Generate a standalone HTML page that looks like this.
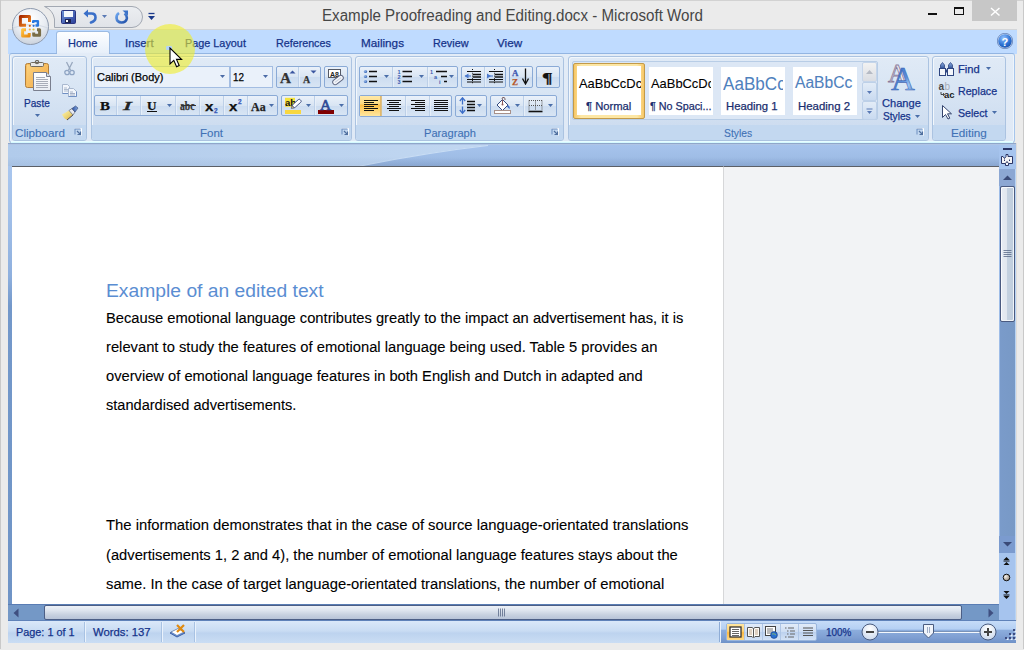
<!DOCTYPE html><html><head><meta charset='utf-8'><style>*{margin:0;padding:0;box-sizing:border-box}
html,body{width:1024px;height:650px;overflow:hidden;background:#EBEBEB;font-family:"Liberation Sans",sans-serif;position:relative}
div,span,svg{position:absolute}
.t{white-space:pre;transform-origin:0 50%;-webkit-text-stroke:0.25px currentColor}
#frameL{left:0;top:0;width:1px;height:650px;background:#C9C9C9}
#frameR{left:1023px;top:0;width:1px;height:650px;background:#C9C9C9}
#frameT{left:0;top:0;width:1024px;height:1px;background:#D2D2D2}
#frameB{left:0;top:649px;width:1024px;height:1px;background:#EBEBEB}
#tabs{left:8px;top:29px;width:1009px;height:25px;background:#BFDBFF;border-top:1px solid #D3D5D8}
#hometab{left:56px;top:31px;width:54px;height:24px;border:1px solid #9CBBE3;border-bottom:none;border-radius:3px 3px 0 0;background:linear-gradient(#FDFEFF,#E5EEF9)}
#ribbon{left:9px;top:53px;width:1006px;height:90px;background:linear-gradient(#E3ECF7,#DFE9F6);border:1px solid #A6C5EC;border-top-color:#93B5E2;border-bottom-color:#9DB4D6;border-radius:3px;box-shadow:inset 1px 0 0 #EEF5FC,inset -1px 0 0 #EEF5FC}
#ribhl{left:11px;top:141px;width:1002px;height:1.5px;background:linear-gradient(#F2FFFF,#C9F6FF)}
.grp{top:56px;height:85px;border:1px solid #ABC3E1;border-radius:3px;background:linear-gradient(#E0EAF6 0%,#D8E5F4 40%,#CEDDF0 82%);box-shadow:inset 1px 1px 0 #F2F7FC}
.glab{left:0;top:68px;width:100%;height:15px;background:#C3D8F0;border-radius:0 0 2px 2px}
.box{border:1px solid #8AAAD6;border-radius:2px;background:linear-gradient(#EAF1FA,#D9E5F3 50%,#CCDCF0 51%,#D8E5F4)}
.combo{border:1px solid #A3BDE2;background:#EAF1FA}
#docbg{left:8px;top:143px;width:1009px;height:24px;background:linear-gradient(#8FA6CA 0px,#8FA6CA 1px,#B0C5E5 1px,#B0C5E5 2px,#A4C2EB 3px,#9FBDE6 14px,#9BB8E0 19px,#8FACD5 23px)}
#leftstrip{left:8px;top:166px;width:4px;height:438px;background:linear-gradient(#A9C6EE 0px,#A3C1EA 40px,#8FB0DE 110px,#7398CA 140px,#6F94C6 438px)}
#page{left:12px;top:166px;width:711px;height:438px;background:#fff;border-top:1px solid #5B5F66}
#gray{left:723px;top:166px;width:277px;height:438px;background:#F2F3F5;border-left:1px solid #D6D7D9;border-top:1px solid #5B5F66}
#vsb{left:999px;top:166px;width:17px;height:438px;background:linear-gradient(90deg,#9FBDE8 0px,#9FBDE8 1px,#7A9BCA 1px,#7899C6 16px,#B8D4F4 16px)}
#rstrip{left:1016px;top:143px;width:1px;height:478px;background:#DEDCDA}
#hsb{left:8px;top:604px;width:991px;height:16px;background:#7498C6;border-top:1px solid #5A7DB4}
#corner{left:999px;top:553px;width:17px;height:67px;background:linear-gradient(90deg,#A6C4EE 16px,#B8D4F4 16px)}
#status{left:8px;top:620px;width:1008px;height:23px;background:linear-gradient(#DAE8F9 0%,#C9DCF3 45%,#BDD3EF 55%,#CADDF4 100%);border-top:1px solid #5F82B9}
</style></head><body><div id='frameT'></div><div id='frameL'></div><div id='frameR'></div><div id='frameB'></div>
<div id='tabs'></div><div id='hometab'></div>
<div id='ribbon'></div><div id='ribhl'></div><div style='left:57px;top:53px;width:52px;height:1px;background:#E3ECF8'></div>
<div class='grp' style='left:12px;width:75px'><div class='glab'></div></div>
<div class='grp' style='left:91px;width:261px'><div class='glab'></div></div>
<div class='grp' style='left:355px;width:209px'><div class='glab'></div></div>
<div class='grp' style='left:568px;width:361px'><div class='glab'></div></div>
<div class='grp' style='left:932px;width:74px'><div class='glab'></div></div>
<div id='docbg'></div><svg style='left:8px;top:145px' width='1009' height='21' viewBox='0 0 1009 21'><defs><linearGradient id='gsw' x1='0' y1='0' x2='1' y2='0'><stop offset='0' stop-color='#B1CBEB'/><stop offset='1' stop-color='#C1D7F1'/></linearGradient><linearGradient id='gsd' x1='0' y1='0' x2='0' y2='1'><stop offset='0' stop-color='#A6C3EC'/><stop offset='.6' stop-color='#9FBDE6'/><stop offset='1' stop-color='#91AED7'/></linearGradient></defs><rect x='0' y='0' width='1009' height='21' fill='url(#gsd)'/><path d='M0 0H480Q420 7 352 21H0Z' fill='url(#gsw)'/><path d='M480 0.5Q420 7.5 352 21' fill='none' stroke='#C9DDF4' stroke-width='1.2'/><defs><linearGradient id='gdk' x1='0' y1='0' x2='0' y2='1'><stop offset='0.55' stop-color='#3A5A90' stop-opacity='0'/><stop offset='1' stop-color='#3A5A90' stop-opacity='0.09'/></linearGradient></defs><rect x='0' y='0' width='1009' height='21' fill='url(#gdk)'/></svg><div id='leftstrip'></div><div id='page'></div><div id='gray'></div><div id='vsb'></div><div id='corner'></div><div id='rstrip'></div><div id='hsb'></div><div id='status'></div>
<svg style='left:24px;top:60px;' width='28' height='32' viewBox='0 0 28 32'>
<rect x='1.5' y='3.5' width='23' height='24' rx='2' fill='#F8BE5E' stroke='#B07E3E'/>
<rect x='3' y='5' width='20' height='21' fill='url(#gclip)'/>
<defs><linearGradient id='gclip' x1='0' y1='0' x2='1' y2='1'><stop offset='0' stop-color='#FBD27F'/><stop offset='1' stop-color='#F3A945'/></linearGradient>
<linearGradient id='gpap' x1='0' y1='0' x2='0' y2='1'><stop offset='0' stop-color='#FFFFFF'/><stop offset='1' stop-color='#E9EDF3'/></linearGradient></defs>
<rect x='6.5' y='2.5' width='13' height='4' rx='1' fill='#E8E8E8' stroke='#6F6A60'/>
<circle cx='13' cy='2' r='1.6' fill='none' stroke='#6F6A60' stroke-width='1.2'/>
<path d='M9.5 12.5H22.5L26.5 16.5V30.5H9.5Z' fill='url(#gpap)' stroke='#7A7F8E'/>
<path d='M22.5 12.5V16.5H26.5' fill='#D8DEE8' stroke='#7A7F8E'/>
<path d='M12 17.5H21M12 19.5H24M12 21.5H24M12 23.5H24M12 25.5H24M12 27.5H24' stroke='#A8ADB8' stroke-width='1'/>
</svg>
<svg style='left:35px;top:114px;' width='5' height='3' viewBox='0 0 5 3'><path d='M0 0H5L2.5 3Z' fill='#4A6EA9'/></svg>
<svg style='left:64px;top:61px;' width='11' height='15' viewBox='0 0 11 15'>
<path d='M2.5 1L6.5 9M8.5 1L4.5 9' stroke='#98A8BE' stroke-width='1.3' fill='none'/>
<circle cx='3' cy='11.5' r='2.2' fill='none' stroke='#8FA5C4' stroke-width='1.3'/>
<circle cx='8' cy='11.5' r='2.2' fill='none' stroke='#8FA5C4' stroke-width='1.3'/>
</svg>
<svg style='left:62px;top:84px;' width='16' height='14' viewBox='0 0 16 14'>
<path d='M0.5 0.5H5.5L7.5 2.5V9.5H0.5Z' fill='#F2F6FC' stroke='#A9B8CF'/>
<path d='M0.5 9.5H7.5' stroke='#6F8FC4'/>
<path d='M2 4H5M2 5.5H6M2 7H6' stroke='#A0AEC4' stroke-width='0.8'/>
<path d='M6.5 4.5H11.5L14.5 7.5V12.5H6.5Z' fill='#F2F6FC' stroke='#A9B8CF'/>
<path d='M6.5 12.5H14.5M14.5 7.5V12.5' stroke='#6F8FC4'/>
<path d='M8 8H11M8 9.5H13M8 11H13' stroke='#8F9EB8' stroke-width='0.8'/>
</svg>
<svg style='left:61px;top:105px;' width='18' height='16' viewBox='0 0 18 16'>
<defs><linearGradient id='gbr' x1='0' y1='0' x2='1' y2='1'><stop offset='0' stop-color='#FFF6B0'/><stop offset='.6' stop-color='#E8D070'/><stop offset='1' stop-color='#D98A20'/></linearGradient>
<linearGradient id='ghd' x1='0' y1='0' x2='1' y2='0'><stop offset='0' stop-color='#3050A0'/><stop offset='1' stop-color='#80A8E0'/></linearGradient></defs>
<path d='M1 9.5L8 5.5L12 10L6 15Q2.5 13.5 1 9.5Z' fill='url(#gbr)'/>
<path d='M6 15L12 10' stroke='#4A4A5A' stroke-width='1'/>
<path d='M8 5.5L11 3.5L14 7L12 10Z' fill='#E6E8F0' stroke='#60646F' stroke-width='0.7'/>
<path d='M11 3.5L14.5 1L17 3L14 7Z' fill='url(#ghd)' stroke='#2C3F70' stroke-width='0.6'/>
</svg>
<svg style='left:74px;top:128px;' width='8' height='8' viewBox='0 0 8 8'><path d='M0.5 0.5H7.5V7.5' fill='none' stroke='#fff' stroke-width='1'/><path d='M0.5 0.5H6.5V1.5H1.5V6.5H0.5Z' fill='#6C8DC0'/><path d='M3 3L6.5 6.5M6.5 3.5V6.5H3.5' fill='none' stroke='#50709F' stroke-width='1.2'/></svg>
<div class='combo' style='left:94px;top:66px;width:136px;height:22px'></div>
<div class='combo' style='left:230px;top:66px;width:43px;height:22px'></div>
<svg style='left:220px;top:75px;' width='5' height='3' viewBox='0 0 5 3'><path d='M0 0H5L2.5 3Z' fill='#4B6BA6'/></svg>
<svg style='left:263px;top:75px;' width='5' height='3' viewBox='0 0 5 3'><path d='M0 0H5L2.5 3Z' fill='#4B6BA6'/></svg>
<div class='box' style='left:276px;top:66px;width:45px;height:22px'></div>
<div style='left:298px;top:67px;width:1px;height:20px;background:#BDD0E8'></div><div style='left:299px;top:67px;width:1px;height:20px;background:#EAF1FA;opacity:.8'></div>
<div class='box' style='left:324px;top:66px;width:24px;height:22px'></div>
<svg style='left:289px;top:70px;' width='7' height='4' viewBox='0 0 7 4'><path d='M0.5 3.5H6.5L3.5 0.5Z' fill='#3B56A0'/></svg>
<svg style='left:310px;top:70px;' width='7' height='4' viewBox='0 0 7 4'><path d='M0.5 0.5H6.5L3.5 3.5Z' fill='#3B56A0'/></svg>
<svg style='left:327px;top:68px;' width='19' height='18' viewBox='0 0 19 18'>
<rect x='1.5' y='1.5' width='12' height='8' fill='#fff' stroke='#555a66'/>
<text x='3' y='8.5' font-family='Liberation Sans' font-size='7' font-weight='bold' fill='#222'>A8</text>
<g transform='rotate(-38 11 12)'><rect x='5' y='9.5' width='12' height='5' rx='2.5' fill='#F4F6FA' stroke='#5E6680'/><path d='M7 12H15' stroke='#C7CFDD'/></g>
</svg>
<div class='box' style='left:94px;top:95px;width:184px;height:21px'></div>
<div style='left:116px;top:96px;width:1px;height:19px;background:#BDD0E8'></div><div style='left:117px;top:96px;width:1px;height:19px;background:#EAF1FA;opacity:.8'></div>
<div style='left:140px;top:96px;width:1px;height:19px;background:#BDD0E8'></div><div style='left:141px;top:96px;width:1px;height:19px;background:#EAF1FA;opacity:.8'></div>
<div style='left:175px;top:96px;width:1px;height:19px;background:#BDD0E8'></div><div style='left:176px;top:96px;width:1px;height:19px;background:#EAF1FA;opacity:.8'></div>
<div style='left:199px;top:96px;width:1px;height:19px;background:#BDD0E8'></div><div style='left:200px;top:96px;width:1px;height:19px;background:#EAF1FA;opacity:.8'></div>
<div style='left:223px;top:96px;width:1px;height:19px;background:#BDD0E8'></div><div style='left:224px;top:96px;width:1px;height:19px;background:#EAF1FA;opacity:.8'></div>
<div style='left:247px;top:96px;width:1px;height:19px;background:#BDD0E8'></div><div style='left:248px;top:96px;width:1px;height:19px;background:#EAF1FA;opacity:.8'></div>
<div style='left:147px;top:111px;width:10px;height:1px;background:#111'></div>
<svg style='left:167px;top:104px;' width='5' height='3' viewBox='0 0 5 3'><path d='M0 0H5L2.5 3Z' fill='#4A6EA9'/></svg>
<div style='left:181px;top:105px;width:15px;height:1px;background:#333'></div>
<svg style='left:269px;top:104px;' width='5' height='3' viewBox='0 0 5 3'><path d='M0 0H5L2.5 3Z' fill='#4A6EA9'/></svg>
<div class='box' style='left:281px;top:95px;width:67px;height:21px'></div>
<div style='left:314px;top:96px;width:1px;height:19px;background:#BDD0E8'></div><div style='left:315px;top:96px;width:1px;height:19px;background:#EAF1FA;opacity:.8'></div>
<svg style='left:284px;top:96px;' width='19' height='19' viewBox='0 0 19 19'>
<rect x='1' y='1.8' width='10' height='9' fill='#F5E23A'/>
<text x='1' y='9.8' font-family='Liberation Sans' font-size='9.5' font-weight='bold' fill='#111'>ab</text>
<g transform='rotate(-42 12 8)'><rect x='8' y='6.3' width='10' height='3.6' rx='1.4' fill='#fff' stroke='#3E4E80' stroke-width='0.9'/><path d='M8 6.3L5.5 8.1L8 9.9Z' fill='#E0C070' stroke='#3E4E80' stroke-width='0.6'/></g>
<rect x='1' y='14' width='16' height='4' fill='#F8D740'/>
</svg>
<svg style='left:306px;top:104px;' width='5' height='3' viewBox='0 0 5 3'><path d='M0 0H5L2.5 3Z' fill='#4A6EA9'/></svg>
<div style='left:318px;top:110px;width:16px;height:4px;background:#800000'></div>
<svg style='left:339px;top:104px;' width='5' height='3' viewBox='0 0 5 3'><path d='M0 0H5L2.5 3Z' fill='#4A6EA9'/></svg>
<svg style='left:341px;top:128px;' width='8' height='8' viewBox='0 0 8 8'><path d='M0.5 0.5H7.5V7.5' fill='none' stroke='#fff' stroke-width='1'/><path d='M0.5 0.5H6.5V1.5H1.5V6.5H0.5Z' fill='#6C8DC0'/><path d='M3 3L6.5 6.5M6.5 3.5V6.5H3.5' fill='none' stroke='#50709F' stroke-width='1.2'/></svg>
<div class='box' style='left:359px;top:66px;width:99px;height:22px'></div>
<div style='left:392px;top:67px;width:1px;height:20px;background:#BDD0E8'></div><div style='left:393px;top:67px;width:1px;height:20px;background:#EAF1FA;opacity:.8'></div>
<div style='left:427px;top:67px;width:1px;height:20px;background:#BDD0E8'></div><div style='left:428px;top:67px;width:1px;height:20px;background:#EAF1FA;opacity:.8'></div>
<svg style='left:363px;top:69px;' width='16' height='16' viewBox='0 0 16 16'>
<defs><radialGradient id='gdot' cx='.35' cy='.35' r='.7'><stop offset='0' stop-color='#9FC0F0'/><stop offset='1' stop-color='#2A5AAE'/></radialGradient></defs>
<circle cx='2.5' cy='2.5' r='1.6' fill='url(#gdot)'/><circle cx='2.5' cy='7.5' r='1.6' fill='url(#gdot)'/><circle cx='2.5' cy='12.5' r='1.6' fill='url(#gdot)'/>
<path d='M6 2.5H14M6 7.5H14M6 12.5H14' stroke='#111' stroke-width='1.6'/>
</svg>
<svg style='left:384px;top:75px;' width='5' height='3' viewBox='0 0 5 3'><path d='M0 0H5L2.5 3Z' fill='#4A6EA9'/></svg>
<svg style='left:396px;top:68px;' width='17' height='17' viewBox='0 0 17 17'>
<text x='1.5' y='6' font-family='Liberation Sans' font-size='5.5' font-weight='bold' fill='#3A5BB0'>1</text>
<text x='1.5' y='11' font-family='Liberation Sans' font-size='5.5' font-weight='bold' fill='#3A5BB0'>2</text>
<text x='1.5' y='16' font-family='Liberation Sans' font-size='5.5' font-weight='bold' fill='#3A5BB0'>3</text>
<path d='M6.5 3.5H16M6.5 8.5H16M6.5 13.5H16' stroke='#111' stroke-width='1.6'/>
</svg>
<svg style='left:419px;top:75px;' width='5' height='3' viewBox='0 0 5 3'><path d='M0 0H5L2.5 3Z' fill='#4A6EA9'/></svg>
<svg style='left:429px;top:68px;' width='20' height='17' viewBox='0 0 20 17'>
<text x='1' y='6' font-family='Liberation Sans' font-size='5.5' font-weight='bold' fill='#3A5BB0'>1</text>
<text x='5' y='11' font-family='Liberation Sans' font-size='5.5' font-weight='bold' fill='#3A5BB0'>a</text>
<text x='10' y='16' font-family='Liberation Sans' font-size='5.5' font-weight='bold' fill='#3A5BB0'>i</text>
<path d='M7 3.5H18M12 8.5H18M15 13.5H18' stroke='#111' stroke-width='1.4'/>
</svg>
<svg style='left:449px;top:75px;' width='5' height='3' viewBox='0 0 5 3'><path d='M0 0H5L2.5 3Z' fill='#4A6EA9'/></svg>
<div class='box' style='left:461px;top:66px;width:45px;height:22px'></div>
<div style='left:484px;top:67px;width:1px;height:20px;background:#BDD0E8'></div><div style='left:485px;top:67px;width:1px;height:20px;background:#EAF1FA;opacity:.8'></div>
<svg style='left:464px;top:68px;' width='18' height='18' viewBox='0 0 18 18'>
<path d='M8.5 1V16' stroke='#111' stroke-width='1' stroke-dasharray='1 1.2'/>
<path d='M3 3.5H17M3 11.5H17M3 14H17' stroke='#111' stroke-width='1'/>
<path d='M9 6.5H17M9 9H17' stroke='#111' stroke-width='1.7'/>
<path d='M0.5 8L4.5 5.5V10.5Z' fill='#4A78CC'/><path d='M1 8H7' stroke='#4A78CC' stroke-width='1.1'/>
</svg>
<svg style='left:486px;top:68px;' width='18' height='18' viewBox='0 0 18 18'>
<path d='M8.5 1V16' stroke='#111' stroke-width='1' stroke-dasharray='1 1.2'/>
<path d='M3 3.5H17M3 11.5H17M3 14H17' stroke='#111' stroke-width='1'/>
<path d='M9 6.5H17M9 9H17' stroke='#111' stroke-width='1.7'/>
<path d='M5 8L1 5.5V10.5Z' fill='#4A78CC'/><path d='M1 8H7' stroke='#4A78CC' stroke-width='1.1'/>
</svg>
<div class='box' style='left:509px;top:66px;width:24px;height:22px'></div>
<svg style='left:522px;top:68px;' width='7' height='17' viewBox='0 0 7 17'><path d='M3.5 0.5V15' stroke='#111' stroke-width='1.3'/><path d='M0.5 10.5L3.5 16L6.5 10.5' fill='none' stroke='#111' stroke-width='1.3'/></svg>
<div class='box' style='left:536px;top:66px;width:24px;height:22px'></div>
<div class='box' style='left:359px;top:95px;width:93px;height:22px'></div>
<div style='left:360px;top:96px;width:21px;height:20px;background:linear-gradient(#FFE9A8 0%,#FFD980 40%,#FFBE45 45%,#FFD473 70%,#FFE6A0 100%);border-right:1px solid #E3B86A'></div>
<div style='left:405px;top:96px;width:1px;height:20px;background:#BDD0E8'></div><div style='left:406px;top:96px;width:1px;height:20px;background:#EAF1FA;opacity:.8'></div>
<div style='left:429px;top:96px;width:1px;height:20px;background:#BDD0E8'></div><div style='left:430px;top:96px;width:1px;height:20px;background:#EAF1FA;opacity:.8'></div>
<div style='left:381px;top:96px;width:1px;height:20px;background:#D9C08A'></div>
<svg style='left:364px;top:95px;' width='15' height='17' viewBox='0 0 15 17'><path d='M0 5.5H14M0 7.5H10M0 9.5H14M0 11.5H10M0 13.5H14M0 15.5H10' stroke='#111' stroke-width='1.1'/></svg>
<svg style='left:387px;top:95px;' width='15' height='17' viewBox='0 0 15 17'><path d='M0.0 5.5H14.0M2.0 7.5H12.0M0.0 9.5H14.0M2.0 11.5H12.0M0.0 13.5H14.0M2.0 15.5H12.0' stroke='#111' stroke-width='1.1'/></svg>
<svg style='left:411px;top:95px;' width='15' height='17' viewBox='0 0 15 17'><path d='M0 5.5H14M4 7.5H14M0 9.5H14M4 11.5H14M0 13.5H14M4 15.5H14' stroke='#111' stroke-width='1.1'/></svg>
<svg style='left:434px;top:95px;' width='15' height='17' viewBox='0 0 15 17'><path d='M0 5.5H14M0 7.5H14M0 9.5H14M0 11.5H14M0 13.5H14M0 15.5H14' stroke='#111' stroke-width='1.1'/></svg>
<div class='box' style='left:455px;top:95px;width:32px;height:22px'></div>
<svg style='left:459px;top:97px;' width='18' height='18' viewBox='0 0 18 18'>
<path d='M3.5 1V7.5M3.5 9.5V16' stroke='#3E6FC8' stroke-width='1.3'/>
<path d='M0.8 4L3.5 0.8L6.2 4M0.8 13L3.5 16.2L6.2 13' fill='none' stroke='#3E6FC8' stroke-width='1.3'/>
<path d='M8 4.5H16M8 7.5H16M8 10.5H16M8 13.5H16' stroke='#111' stroke-width='1.4'/>
</svg>
<svg style='left:477px;top:104px;' width='5' height='3' viewBox='0 0 5 3'><path d='M0 0H5L2.5 3Z' fill='#4A6EA9'/></svg>
<div class='box' style='left:490px;top:95px;width:67px;height:22px'></div>
<div style='left:523px;top:96px;width:1px;height:20px;background:#BDD0E8'></div><div style='left:524px;top:96px;width:1px;height:20px;background:#EAF1FA;opacity:.8'></div>
<svg style='left:494px;top:97px;' width='18' height='18' viewBox='0 0 18 18'>
<path d='M3 8L8.5 2.5L14 8L8.5 13.5Z' fill='#fff' stroke='#334A80'/>
<path d='M8.5 2.5V7.5' stroke='#8A5A5A' stroke-width='1'/><circle cx='8.5' cy='7.5' r='1' fill='#8A5A5A'/>
<path d='M8 2Q8 0 10 0.5Q11.5 1 11 3' fill='none' stroke='#6A4A4A' stroke-width='0.9'/>
<path d='M14 8Q16.5 9.5 15.5 12Q14 10.5 13 9.5Z' fill='#3C6CC4'/>
<rect x='0.5' y='13.5' width='16' height='3' fill='#fff' stroke='#A89088'/>
</svg>
<svg style='left:515px;top:104px;' width='5' height='3' viewBox='0 0 5 3'><path d='M0 0H5L2.5 3Z' fill='#4A6EA9'/></svg>
<svg style='left:528px;top:99px;' width='15' height='14' viewBox='0 0 15 14'>
<path d='M1 1.5H14M1 6.5H14M1 1.5V11M7.5 1.5V11M14 1.5V11' stroke='#555' stroke-width='1' stroke-dasharray='1 1'/>
<path d='M0.5 12.5H14.5' stroke='#111' stroke-width='1.6'/>
</svg>
<svg style='left:548px;top:104px;' width='5' height='3' viewBox='0 0 5 3'><path d='M0 0H5L2.5 3Z' fill='#4A6EA9'/></svg>
<svg style='left:551px;top:128px;' width='8' height='8' viewBox='0 0 8 8'><path d='M0.5 0.5H7.5V7.5' fill='none' stroke='#fff' stroke-width='1'/><path d='M0.5 0.5H6.5V1.5H1.5V6.5H0.5Z' fill='#6C8DC0'/><path d='M3 3L6.5 6.5M6.5 3.5V6.5H3.5' fill='none' stroke='#50709F' stroke-width='1.2'/></svg>
<div style='left:572px;top:61px;width:306px;height:59px;border:1px solid #B8CDE6;background:#DCE7F5;border-radius:2px'></div>
<div style='left:573px;top:63px;width:72px;height:56px;border-radius:2px;background:linear-gradient(90deg,#F7C766,#FDE7A5 10%,#FDE7A5 90%,#F7C766);border:1px solid #C29A4A'></div>
<div style='left:577px;top:66px;width:64px;height:49px;background:#fff'></div>
<div style='left:649px;top:67px;width:64px;height:48px;background:#fff'></div>
<div style='left:721px;top:67px;width:64px;height:48px;background:#fff'></div>
<div style='left:793px;top:67px;width:64px;height:48px;background:#fff'></div>
<div style='left:577px;top:66px;width:64px;height:49px;overflow:hidden'><div class='t' style='left:1.9px;top:11.4px;font-size:13.3px;line-height:13.3px;color:#000;transform:scaleX(0.97);-webkit-text-stroke:0.1px #000'>AaBbCcDc</div></div>
<div style='left:649px;top:67px;width:62px;height:48px;overflow:hidden'><div class='t' style='left:1.8px;top:10.4px;font-size:13.3px;line-height:13.3px;color:#000;transform:scaleX(0.97);-webkit-text-stroke:0.1px #000'>AaBbCcDc</div></div>
<div style='left:721px;top:67px;width:62px;height:48px;overflow:hidden'><div class='t' style='left:1.8px;top:8.1px;font-size:18px;line-height:18px;color:#4F81BD;transform:scaleX(0.95);-webkit-text-stroke:0'>AaBbCc</div></div>
<div style='left:793px;top:67px;width:64px;height:48px;overflow:hidden'><div class='t' style='left:2px;top:8.2px;font-size:16px;line-height:16px;color:#4F81BD;transform:scaleX(0.976);-webkit-text-stroke:0.1px #4F81BD'>AaBbCc</div></div>
<div style='left:862px;top:62px;width:15px;height:20px;border:1px solid #C5D5EA;border-radius:2px;background:linear-gradient(#F2F2F2,#DADDE3)'></div>
<div style='left:862px;top:82px;width:15px;height:19px;border:1px solid #BDD0E8;border-radius:2px;background:linear-gradient(#E3ECF7,#C9DAF0)'></div>
<div style='left:862px;top:101px;width:15px;height:19px;border:1px solid #BDD0E8;border-radius:2px;background:linear-gradient(#E3ECF7,#C9DAF0)'></div>
<svg style='left:866px;top:70px;' width='7' height='4' viewBox='0 0 7 4'><path d='M0 4H7L3.5 0Z' fill='#B5BAC4'/></svg>
<svg style='left:867px;top:91px;' width='5' height='3' viewBox='0 0 5 3'><path d='M0 0H5L2.5 3Z' fill='#5A7AB5'/></svg>
<svg style='left:866px;top:108px;' width='7' height='7' viewBox='0 0 7 7'><path d='M0.5 1H6.5' stroke='#5A7AB5'/><path d='M1 3H6L3.5 6Z' fill='#5A7AB5'/></svg>
<svg style='left:884px;top:60px;' width='36' height='32' viewBox='0 0 36 32'>
<defs><linearGradient id='gA' x1='0' y1='0' x2='1' y2='1'><stop offset='0' stop-color='#2F5FB8'/><stop offset='.55' stop-color='#5C8FDA'/><stop offset='.7' stop-color='#9CC4F2'/><stop offset='1' stop-color='#3A6CC0'/></linearGradient></defs>
<text x='4' y='22' font-family='Liberation Serif' font-size='26' fill='#EEEEF2' stroke='#8A7C9C' stroke-width='0.8'>A</text>
<text x='7' y='30' font-family='Liberation Serif' font-size='33' fill='url(#gA)' stroke='#3560B0' stroke-width='0.5'>A</text>
</svg>
<svg style='left:915px;top:115px;' width='5' height='3' viewBox='0 0 5 3'><path d='M0 0H5L2.5 3Z' fill='#4A6EA9'/></svg>
<svg style='left:916px;top:128px;' width='8' height='8' viewBox='0 0 8 8'><path d='M0.5 0.5H7.5V7.5' fill='none' stroke='#fff' stroke-width='1'/><path d='M0.5 0.5H6.5V1.5H1.5V6.5H0.5Z' fill='#6C8DC0'/><path d='M3 3L6.5 6.5M6.5 3.5V6.5H3.5' fill='none' stroke='#50709F' stroke-width='1.2'/></svg>
<svg style='left:939px;top:62px;' width='16' height='14' viewBox='0 0 16 14'>
<defs><linearGradient id='gbin' x1='0' y1='0' x2='0' y2='1'><stop offset='0' stop-color='#8FB3E8'/><stop offset='1' stop-color='#2F4F95'/></linearGradient></defs>
<rect x='0.5' y='6.5' width='6' height='7' fill='#F3F6FB' stroke='#2E4580'/>
<rect x='8.5' y='6.5' width='6' height='7' fill='#F3F6FB' stroke='#2E4580'/>
<path d='M1.5 6.5V3L3.5 0.5L5.5 3V6.5Z M9.5 6.5V3L11.5 0.5L13.5 3V6.5Z' fill='url(#gbin)' stroke='#2E4580' stroke-width='0.8'/>
<rect x='6.5' y='7.5' width='2' height='3' fill='#2E4580'/>
</svg>
<svg style='left:986px;top:67px;' width='5' height='3' viewBox='0 0 5 3'><path d='M0 0H5L2.5 3Z' fill='#4A6EA9'/></svg>
<svg style='left:938px;top:82px;' width='19' height='17' viewBox='0 0 19 17'>
<text x='0.5' y='8' font-family='Liberation Sans' font-size='10' font-weight='bold' fill='#4A4A4A'>a</text>
<text x='6.5' y='8' font-family='Liberation Sans' font-size='10' fill='#A6ACB6'>b</text>
<text x='6' y='15.5' font-family='Liberation Sans' font-size='9.5' font-weight='bold' fill='#222'>ac</text>
<path d='M3 10V12.5H6' fill='none' stroke='#333' stroke-width='0.9'/><path d='M5 11L6.5 12.5L5 14' fill='none' stroke='#333' stroke-width='0.8'/>
</svg>
<svg style='left:941px;top:104px;' width='11' height='16' viewBox='0 0 11 16'><path d='M1.5 1.5V13.5L4.5 10.5L7 15L8.8 14.2L6.5 9.8H10.5Z' fill='#fff' stroke='#35456E' stroke-width='1' stroke-linejoin='round'/></svg>
<svg style='left:992px;top:111px;' width='5' height='3' viewBox='0 0 5 3'><path d='M0 0H5L2.5 3Z' fill='#4A6EA9'/></svg>
<svg style='left:40px;top:4px' width='130' height='26' viewBox='0 0 130 26'><defs><linearGradient id='qat' x1='0' y1='0' x2='0' y2='1'><stop offset='0' stop-color='#ECEEF1'/><stop offset='1' stop-color='#E0E3E8'/></linearGradient></defs><path d='M4.5 2.5H92A10.5 10.5 0 0 1 92 23.5H14.5V15Q13 6 4.5 2.5Z' fill='url(#qat)' stroke='#A3A9B3' stroke-width='1'/></svg>
<svg style='left:61px;top:10px;' width='15' height='14' viewBox='0 0 15 14'>
<defs><linearGradient id='gsv' x1='0' y1='0' x2='1' y2='1'><stop offset='0' stop-color='#6E93D8'/><stop offset='1' stop-color='#2B3F9A'/></linearGradient></defs>
<rect x='0.5' y='0.5' width='14' height='13' rx='1' fill='url(#gsv)' stroke='#2A3580'/>
<rect x='3' y='1' width='9' height='6' fill='#F4F7FC'/>
<rect x='4' y='9' width='6' height='4' fill='#1C2350'/><rect x='5' y='10' width='2' height='2' fill='#fff'/>
</svg>
<svg style='left:83px;top:9px;' width='14' height='15' viewBox='0 0 14 15'>
<path d='M3 4.5H8.5Q12.5 4.5 12.5 8.5Q12.5 12 8 13.5' fill='none' stroke='#3A6FC8' stroke-width='2.6' stroke-linecap='round'/>
<path d='M0.5 4.5L5 0.5V8.5Z' fill='#3A6FC8'/>
</svg>
<svg style='left:102px;top:15px;' width='5' height='3' viewBox='0 0 5 3'><path d='M0 0H5L2.5 3Z' fill='#5A7AB5'/></svg>
<svg style='left:115px;top:10px;' width='14' height='14' viewBox='0 0 14 14'>
<defs><linearGradient id='gredo' x1='0' y1='0' x2='1' y2='1'><stop offset='0' stop-color='#6FA8F0'/><stop offset='1' stop-color='#1F4FA8'/></linearGradient></defs>
<path d='M4 3Q1.2 4.8 1.5 8Q2 12.3 6.5 12.5Q11 12.5 11.8 8.5Q12.2 5.5 9.5 3.5' fill='none' stroke='url(#gredo)' stroke-width='2.6'/>
<path d='M7.5 0.5H13V5.5Z' fill='#3A72C8'/>
</svg>
<svg style='left:148px;top:12px;' width='7' height='10' viewBox='0 0 7 10'><path d='M0.5 1.5H6.5' stroke='#1B3A8A' stroke-width='1.3'/><path d='M0 4H7L3.5 8Z' fill='#1B3A8A'/></svg>
<svg style='left:11px;top:7px;' width='39' height='39' viewBox='0 0 39 39'>
<defs>
<radialGradient id='gob' cx='.5' cy='.3' r='.75'><stop offset='0' stop-color='#FFFFFF'/><stop offset='.55' stop-color='#E9EDF3'/><stop offset='1' stop-color='#C5CDD8'/></radialGradient>
<linearGradient id='gor' x1='0' y1='0' x2='1' y2='1'><stop offset='0' stop-color='#A82A02'/><stop offset='1' stop-color='#F08A20'/></linearGradient>
<linearGradient id='gye' x1='0' y1='0' x2='1' y2='1'><stop offset='0' stop-color='#FFC040'/><stop offset='1' stop-color='#E88A10'/></linearGradient>
</defs>
<circle cx='19.5' cy='19.5' r='18' fill='url(#gob)' stroke='#8E9AAE' stroke-width='1'/>
<path d='M2 21Q19.5 14 37 21' fill='none' stroke='#D3DAE4' stroke-width='1'/>
<path d='M18.5 15V9.4H9.4V18.2H15' fill='none' stroke='url(#gor)' stroke-width='3' stroke-linejoin='round'/>
<path d='M22.2 16V14.1H26.9V18.5H24.5' fill='none' stroke='#2A7AE0' stroke-width='2.4' stroke-linejoin='round'/>
<path d='M15 22.7H11.6V29.1H18.2V26' fill='none' stroke='url(#gye)' stroke-width='3' stroke-linejoin='round'/>
<path d='M26 22.7H28.6V28.3H22.7V25.5' fill='none' stroke='#7A6E48' stroke-width='3' stroke-linejoin='round'/>
<circle cx='18.8' cy='18.8' r='1.1' fill='#D06010'/><circle cx='22.6' cy='18.8' r='1.1' fill='#2A70D8'/>
<circle cx='18.8' cy='22.5' r='1.1' fill='#F8B040'/><circle cx='22.5' cy='22.5' r='1.1' fill='#D8C040'/>
</svg>
<div style='left:972px;top:0;width:45px;height:21px;background:#C7C7C7'></div>
<svg style='left:990px;top:7px;' width='11' height='10' viewBox='0 0 11 10'><path d='M1 1L9.5 8.5M9.5 1L1 8.5' stroke='#fff' stroke-width='1.5'/></svg>
<div style='left:928px;top:13px;width:9px;height:2px;background:#111'></div>
<div style='left:954px;top:7px;width:10px;height:8px;border:1px solid #111;border-top-width:2px'></div>
<svg style='left:997px;top:33px;' width='16' height='16' viewBox='0 0 16 16'>
<defs><radialGradient id='ghelp' cx='.4' cy='.3' r='.8'><stop offset='0' stop-color='#8EC0FF'/><stop offset='.6' stop-color='#2A6ED0'/><stop offset='1' stop-color='#1A4AA0'/></radialGradient></defs>
<circle cx='8' cy='8' r='7.3' fill='url(#ghelp)' stroke='#fff' stroke-width='0.8'/><circle cx='8' cy='8' r='7.7' fill='none' stroke='#2C5298' stroke-width='0.6'/>
<text x='4.6' y='12.5' font-family='Liberation Sans' font-size='11' font-weight='bold' fill='#fff'>?</text>
</svg>
<div style='left:999px;top:145px;width:17px;height:24px;background:#A6C4EE'></div><div style='left:999px;top:169px;width:16px;height:17px;background:#8CA7D3'></div>
<svg style='left:1003px;top:175px;' width='9' height='5' viewBox='0 0 9 5'><path d='M0 5H9L4.5 0.5Z' fill='#3A4A78'/></svg>
<div style='left:1000px;top:186px;width:15px;height:136px;border:1px solid #4A5A80;border-radius:2px;box-shadow:inset 1px 1px 0 #F8FAFD,inset -1px -1px 0 #F0F4F8;background:linear-gradient(90deg,#E8ECF3,#E1E7EF 45%,#C4D1E0 50%,#BFCDDD 100%)'></div>
<svg style='left:1003px;top:250px;' width='9' height='7' viewBox='0 0 9 7'><path d='M0.5 0.5H8.5M0.5 2.5H8.5M0.5 4.5H8.5M0.5 6.5H8.5' stroke='#5A6A88' stroke-width='0.8'/></svg>
<div style='left:999px;top:536px;width:16px;height:17px;background:#7B9BCF'></div>
<svg style='left:1003px;top:542px;' width='9' height='5' viewBox='0 0 9 5'><path d='M0 0H9L4.5 4.5Z' fill='#3A4A78'/></svg>
<svg style='left:1003px;top:557px;' width='7' height='8' viewBox='0 0 7 8'><path d='M0.5 3H6.5L3.5 0Z M0.5 8H6.5L3.5 5Z' fill='#111'/><path d='M0.5 4H6.5' stroke='#111' stroke-width='1'/></svg>
<svg style='left:1002px;top:573px;' width='9' height='9' viewBox='0 0 9 9'><defs><radialGradient id='gbr2' cx='.35' cy='.35' r='.7'><stop offset='0' stop-color='#F4F0EA'/><stop offset='1' stop-color='#9A8E80'/></radialGradient></defs><circle cx='4.5' cy='4.5' r='3.3' fill='url(#gbr2)' stroke='#111' stroke-width='1'/></svg>
<svg style='left:1003px;top:591px;' width='7' height='8' viewBox='0 0 7 8'><path d='M0.5 0H6.5L3.5 3Z M0.5 5H6.5L3.5 8Z' fill='#111'/><path d='M0.5 4H6.5' stroke='#111' stroke-width='1'/></svg>
<svg style='left:13px;top:608px;' width='6' height='10' viewBox='0 0 6 10'><path d='M5.5 0.5V9.5L0.5 5Z' fill='#3F4F80'/></svg>
<div style='left:44px;top:605px;width:918px;height:15px;border:1px solid #4C5F86;border-radius:2px;background:linear-gradient(#EEF2F8,#DDE4EE 35%,#C6D0DF 70%,#B8C4D8)'></div>
<svg style='left:498px;top:608px;' width='7' height='9' viewBox='0 0 7 9'><path d='M0.5 0.5V8.5M2.5 0.5V8.5M4.5 0.5V8.5M6.5 0.5V8.5' stroke='#5A6A88' stroke-width='0.8'/></svg>
<svg style='left:988px;top:608px;' width='6' height='10' viewBox='0 0 6 10'><path d='M0.5 0.5V9.5L5.5 5Z' fill='#3F4F80'/></svg>
<div style='left:1003px;top:148px;width:9px;height:2px;background:#2A3566'></div>
<svg style='left:1000px;top:153px;' width='14' height='14' viewBox='0 0 14 14'>
<path d='M1.5 3.5H3L4.5 5.5L6 3.5V1.5H8V3.5H12.5V10.5H1.5Z' fill='#F4F4F6' stroke='#2A3566' stroke-width='1'/>
<path d='M4.5 6.5V8M9.5 6.5V8' stroke='#2A3566' stroke-width='1'/>
<path d='M5.5 10.5L7 8.5L8.5 10.5V12.5H5.5Z' fill='#F4F4F6' stroke='#2A3566' stroke-width='1'/>
</svg>
<div style='left:84px;top:622px;width:1px;height:20px;background:#A8C2E3'></div><div style='left:85px;top:622px;width:1px;height:20px;background:#EAF2FC'></div>
<div style='left:161px;top:622px;width:1px;height:20px;background:#A8C2E3'></div><div style='left:162px;top:622px;width:1px;height:20px;background:#EAF2FC'></div>
<div style='left:194px;top:622px;width:1px;height:20px;background:#A8C2E3'></div><div style='left:195px;top:622px;width:1px;height:20px;background:#EAF2FC'></div>
<div style='left:719px;top:622px;width:1px;height:20px;background:#8EACD6'></div><div style='left:720px;top:622px;width:1px;height:20px;background:#EAF2FC'></div>
<div style='left:721px;top:621px;width:295px;height:22px;background:linear-gradient(#C6DCF8 0%,#B4CFF3 38%,#8DAEDD 40%,#7F9FD2 75%,#6F92C8 100%)'></div>
<svg style='left:169px;top:624px;' width='18' height='15' viewBox='0 0 18 15'>
<path d='M1 9L9 5L16 9L8 13Z' fill='#6A96E0' stroke='#2A4A90' stroke-width='0.8'/>
<path d='M2 8L9 4.5L15 8L8 11.5Z' fill='#fff' stroke='#4A6AA0' stroke-width='0.6'/>
<path d='M8 1L15 8M15 1L8 8' stroke='#E08A10' stroke-width='2.2'/>
</svg>
<div style='left:726px;top:623px;width:91px;height:18px;border:1px solid #9AB6DD;border-radius:2px;background:linear-gradient(#E2ECF9,#CDDDF3 50%,#BCD1EE 51%,#D3E2F6)'></div>
<div style='left:727px;top:624px;width:17px;height:16px;background:linear-gradient(#FFE7A2,#FFD173 45%,#FFB940 55%,#FFDA86)'></div>
<div style='left:744px;top:624px;width:1px;height:16px;background:#AFC6E6'></div>
<div style='left:762px;top:624px;width:1px;height:16px;background:#AFC6E6'></div>
<div style='left:780px;top:624px;width:1px;height:16px;background:#AFC6E6'></div>
<div style='left:798px;top:624px;width:1px;height:16px;background:#AFC6E6'></div>
<svg style='left:729px;top:626px;' width='13' height='12' viewBox='0 0 13 12'><rect x='1' y='1' width='11' height='10' fill='#fff' stroke='#333' stroke-width='1.3'/><path d='M3 3.5H10M3 5.5H10M3 7.5H10M3 9.5H10' stroke='#555' stroke-width='0.9'/></svg>
<svg style='left:747px;top:626px;' width='13' height='13' viewBox='0 0 13 13'><path d='M0.5 1.5H5L6.5 2.5L8 1.5H12.5V10.5H8L6.5 12L5 10.5H0.5Z' fill='#FDFBF6' stroke='#555' stroke-width='1'/><path d='M6.5 2.5V11' stroke='#555'/><path d='M2 4H5M2 6H5M2 8H5M8 4H11M8 6H11M8 8H11' stroke='#B09070' stroke-width='0.8'/></svg>
<svg style='left:765px;top:626px;' width='13' height='13' viewBox='0 0 13 13'><rect x='0.5' y='0.5' width='10' height='9' fill='#fff' stroke='#444'/><path d='M2 3H8M2 5H8M2 7H6' stroke='#666' stroke-width='0.9'/><circle cx='9' cy='9' r='3.4' fill='#2A70D0' stroke='#1A3A80' stroke-width='0.6'/><path d='M7 8Q9 7 11 9' stroke='#8FC060' stroke-width='0.8' fill='none'/></svg>
<svg style='left:784px;top:626px;' width='12' height='12' viewBox='0 0 12 12'><path d='M1 2H2.5M4 2H10M3 5H4.5M6 5H11M3 8H4.5M6 8H11M1 11H2.5M4 11H10' stroke='#666' stroke-width='1.1'/></svg>
<svg style='left:802px;top:626px;' width='12' height='12' viewBox='0 0 12 12'><path d='M1 2H11M1 4.5H11M1 7H11M1 9.5H11' stroke='#555' stroke-width='1.1'/></svg>
<div style='left:878px;top:631px;width:102px;height:1px;background:#7A93B8'></div><div style='left:878px;top:632px;width:102px;height:1px;background:#F4F8FD'></div>
<svg style='left:861px;top:623px;' width='18' height='18' viewBox='0 0 18 18'><defs><radialGradient id='gzm' cx='.5' cy='.3' r='.8'><stop offset='0' stop-color='#FFFFFF'/><stop offset='1' stop-color='#C4D3EA'/></radialGradient></defs><circle cx='9' cy='9' r='8' fill='url(#gzm)' stroke='#4A5C80'/><path d='M5 9H13' stroke='#444' stroke-width='2'/></svg>
<svg style='left:979px;top:623px;' width='18' height='18' viewBox='0 0 18 18'><circle cx='9' cy='9' r='8' fill='url(#gzm)' stroke='#4A5C80'/><path d='M5 9H13M9 5V13' stroke='#444' stroke-width='2'/></svg>
<svg style='left:923px;top:624px;' width='11' height='15' viewBox='0 0 11 15'><path d='M0.5 0.5H10.5V9L5.5 14L0.5 9Z' fill='#F0F4FA' stroke='#4A5C80'/><path d='M4.5 3V9M6.5 3V9' stroke='#8A9ABA' stroke-width='0.8'/></svg>
<svg style='left:1004px;top:628px;' width='12' height='12' viewBox='0 0 12 12'><path d='M10 2h2v2h-2zM6 6h2v2h-2zM10 6h2v2h-2zM2 10h2v2h-2zM6 10h2v2h-2zM10 10h2v2h-2z' fill='#E8F0FA' transform='translate(0.6 0.6)'/><path d='M9 1h2v2h-2zM5 5h2v2h-2zM9 5h2v2h-2zM1 9h2v2h-2zM5 9h2v2h-2zM9 9h2v2h-2z' fill='#3D4C80'/></svg>
<div class='t' style='left:322.2px;top:7.59px;font-size:15.6px;line-height:15.6px;color:#464646;font-family:"Liberation Sans",sans-serif;transform:scaleX(0.9711);-webkit-text-stroke:0'>Example Proofreading and Editing.docx - Microsoft Word</div>
<div class='t' style='left:67.8px;top:37.93px;font-size:11.3px;line-height:11.3px;color:#15338A;font-family:"Liberation Sans",sans-serif;transform:scaleX(0.9721);'>Home</div>
<div class='t' style='left:125.3px;top:37.93px;font-size:11.3px;line-height:11.3px;color:#15338A;font-family:"Liberation Sans",sans-serif;transform:scaleX(1.0118);'>Insert</div>
<div class='t' style='left:184.6px;top:37.93px;font-size:11.3px;line-height:11.3px;color:#15338A;font-family:"Liberation Sans",sans-serif;transform:scaleX(0.9598);'>Page Layout</div>
<div class='t' style='left:275.70000000000005px;top:37.93px;font-size:11.3px;line-height:11.3px;color:#15338A;font-family:"Liberation Sans",sans-serif;transform:scaleX(0.9484);'>References</div>
<div class='t' style='left:360.6px;top:37.93px;font-size:11.3px;line-height:11.3px;color:#15338A;font-family:"Liberation Sans",sans-serif;transform:scaleX(1.0377);'>Mailings</div>
<div class='t' style='left:433.40000000000003px;top:37.93px;font-size:11.3px;line-height:11.3px;color:#15338A;font-family:"Liberation Sans",sans-serif;transform:scaleX(0.9582);'>Review</div>
<div class='t' style='left:497.1px;top:37.93px;font-size:11.3px;line-height:11.3px;color:#15338A;font-family:"Liberation Sans",sans-serif;transform:scaleX(1.0331);'>View</div>
<div class='t' style='left:14.6px;top:128.23px;font-size:11.3px;line-height:11.3px;color:#4071B5;font-family:"Liberation Sans",sans-serif;transform:scaleX(1.0319);-webkit-text-stroke:0.1px #4071B5'>Clipboard</div>
<div class='t' style='left:199.7px;top:128.23px;font-size:11.3px;line-height:11.3px;color:#4071B5;font-family:"Liberation Sans",sans-serif;transform:scaleX(1.0173);-webkit-text-stroke:0.1px #4071B5'>Font</div>
<div class='t' style='left:423.70000000000005px;top:128.23px;font-size:11.3px;line-height:11.3px;color:#4071B5;font-family:"Liberation Sans",sans-serif;transform:scaleX(0.9855);-webkit-text-stroke:0.1px #4071B5'>Paragraph</div>
<div class='t' style='left:723.5px;top:128.23px;font-size:11.3px;line-height:11.3px;color:#4071B5;font-family:"Liberation Sans",sans-serif;transform:scaleX(0.9134);-webkit-text-stroke:0.1px #4071B5'>Styles</div>
<div class='t' style='left:950.7px;top:128.23px;font-size:11.3px;line-height:11.3px;color:#4071B5;font-family:"Liberation Sans",sans-serif;transform:scaleX(1.0392);-webkit-text-stroke:0.1px #4071B5'>Editing</div>
<div class='t' style='left:105.6px;top:281.03px;font-size:19.1px;line-height:19.1px;color:#5A8DD2;font-family:"Liberation Sans",sans-serif;transform:scaleX(1.0099);-webkit-text-stroke:0'>Example of an edited text</div>
<div class='t' style='left:105.5px;top:311.05px;font-size:14.7px;line-height:14.7px;color:#000;font-family:"Liberation Sans",sans-serif;transform:scaleX(1.0016);-webkit-text-stroke:0.1px #000'>Because emotional language contributes greatly to the impact an advertisement has, it is</div>
<div class='t' style='left:105.5px;top:340.05px;font-size:14.7px;line-height:14.7px;color:#000;font-family:"Liberation Sans",sans-serif;transform:scaleX(1.0041);-webkit-text-stroke:0.1px #000'>relevant to study the features of emotional language being used. Table 5 provides an</div>
<div class='t' style='left:105.5px;top:369.05px;font-size:14.7px;line-height:14.7px;color:#000;font-family:"Liberation Sans",sans-serif;transform:scaleX(1.0004);-webkit-text-stroke:0.1px #000'>overview of emotional language features in both English and Dutch in adapted and</div>
<div class='t' style='left:105.5px;top:398.05px;font-size:14.7px;line-height:14.7px;color:#000;font-family:"Liberation Sans",sans-serif;transform:scaleX(0.9919);-webkit-text-stroke:0.1px #000'>standardised advertisements.</div>
<div class='t' style='left:105.5px;top:518.15px;font-size:14.7px;line-height:14.7px;color:#000;font-family:"Liberation Sans",sans-serif;transform:scaleX(1.0091);-webkit-text-stroke:0.1px #000'>The information demonstrates that in the case of source language-orientated translations</div>
<div class='t' style='left:105.5px;top:547.65px;font-size:14.7px;line-height:14.7px;color:#000;font-family:"Liberation Sans",sans-serif;transform:scaleX(1.0019);-webkit-text-stroke:0.1px #000'>(advertisements 1, 2 and 4), the number of emotional language features stays about the</div>
<div class='t' style='left:105.5px;top:576.95px;font-size:14.7px;line-height:14.7px;color:#000;font-family:"Liberation Sans",sans-serif;transform:scaleX(1.0072);-webkit-text-stroke:0.1px #000'>same. In the case of target language-orientated translations, the number of emotional</div>
<div class='t' style='left:15.700000000000001px;top:626.73px;font-size:11.3px;line-height:11.3px;color:#15338A;font-family:"Liberation Sans",sans-serif;transform:scaleX(0.9616);'>Page: 1 of 1</div>
<div class='t' style='left:93.1px;top:626.93px;font-size:11.3px;line-height:11.3px;color:#15338A;font-family:"Liberation Sans",sans-serif;transform:scaleX(1.0007);'>Words: 137</div>
<div class='t' style='left:826.0px;top:627.33px;font-size:11.3px;line-height:11.3px;color:#15338A;font-family:"Liberation Sans",sans-serif;transform:scaleX(0.8787);'>100%</div>
<div class='t' style='left:23.8px;top:98.13px;font-size:11.3px;line-height:11.3px;color:#15338A;font-family:"Liberation Sans",sans-serif;transform:scaleX(0.8930);'>Paste</div>
<div class='t' style='left:96.89999999999999px;top:72.13px;font-size:11.3px;line-height:11.3px;color:#000;font-family:"Liberation Sans",sans-serif;transform:scaleX(0.9702);'>Calibri (Body)</div>
<div class='t' style='left:233.0px;top:72.13px;font-size:11.3px;line-height:11.3px;color:#000;font-family:"Liberation Sans",sans-serif;transform:scaleX(0.8745);'>12</div>
<div class='t' style='left:280.1px;top:71.30px;font-size:15px;line-height:15px;color:#333;font-family:"Liberation Serif",sans-serif;transform:scaleX(1.0144);font-weight:bold'>A</div>
<div class='t' style='left:303.1px;top:75.01px;font-size:10.5px;line-height:10.5px;color:#333;font-family:"Liberation Serif",sans-serif;transform:scaleX(0.9481);font-weight:bold'>A</div>
<div class='t' style='left:99.69999999999999px;top:99.47px;font-size:13.5px;line-height:13.5px;color:#111;font-family:"Liberation Serif",sans-serif;transform:scaleX(1.1092);font-weight:bold'>B</div>
<div class='t' style='left:123.3px;top:99.47px;font-size:13.5px;line-height:13.5px;color:#222;font-family:"Liberation Serif",sans-serif;transform:scaleX(1.8889);font-style:italic;-webkit-text-stroke:0.5px #222'>I</div>
<div class='t' style='left:146.7px;top:99.47px;font-size:13.5px;line-height:13.5px;color:#111;font-family:"Liberation Serif",sans-serif;transform:scaleX(0.9744);font-weight:bold'>U</div>
<div class='t' style='left:180.1px;top:100.32px;font-size:12.5px;line-height:12.5px;color:#333;font-family:"Liberation Serif",sans-serif;transform:scaleX(0.7787);font-weight:bold'>abc</div>
<div class='t' style='left:204.9px;top:99.89px;font-size:13px;line-height:13px;color:#111;font-family:"Liberation Sans",sans-serif;transform:scaleX(1.1611);font-weight:bold'>x</div>
<div class='t' style='left:213.9px;top:107.70px;font-size:6.5px;line-height:6.5px;color:#3558B8;font-family:"Liberation Sans",sans-serif;transform:scaleX(0.9931);font-weight:bold'>2</div>
<div class='t' style='left:228.9px;top:99.89px;font-size:13px;line-height:13px;color:#111;font-family:"Liberation Sans",sans-serif;transform:scaleX(1.1611);font-weight:bold'>x</div>
<div class='t' style='left:237.9px;top:99.40px;font-size:6.5px;line-height:6.5px;color:#3558B8;font-family:"Liberation Sans",sans-serif;transform:scaleX(0.9931);font-weight:bold'>2</div>
<div class='t' style='left:250.9px;top:100.47px;font-size:13.5px;line-height:13.5px;color:#222;font-family:"Liberation Serif",sans-serif;transform:scaleX(0.8848);font-weight:bold'>Aa</div>
<div class='t' style='left:320.1px;top:96.78px;font-size:15.5px;line-height:15.5px;color:#2F4A94;font-family:"Liberation Serif",sans-serif;transform:scaleX(0.9997);-webkit-text-stroke:0.6px #2F4A94'>A</div>
<div class='t' style='left:511.9px;top:68.90px;font-size:8.5px;line-height:8.5px;color:#3E58B0;font-family:"Liberation Serif",sans-serif;transform:scaleX(1.0422);font-weight:bold'>A</div>
<div class='t' style='left:512.3000000000001px;top:77.50px;font-size:8.5px;line-height:8.5px;color:#B5562A;font-family:"Liberation Serif",sans-serif;transform:scaleX(1.0579);font-weight:bold'>Z</div>
<div class='t' style='left:541.5px;top:71.00px;font-size:15px;line-height:15px;color:#111;font-family:"Liberation Serif",sans-serif;transform:scaleX(1.3071);font-weight:bold'>¶</div>
<div class='t' style='left:585.7px;top:101.03px;font-size:11.3px;line-height:11.3px;color:#1A2E6E;font-family:"Liberation Sans",sans-serif;transform:scaleX(0.9929);'>¶ Normal</div>
<div class='t' style='left:649.5px;top:101.03px;font-size:11.3px;line-height:11.3px;color:#1A2E6E;font-family:"Liberation Sans",sans-serif;transform:scaleX(0.9540);'>¶ No Spaci...</div>
<div class='t' style='left:725.8000000000001px;top:101.03px;font-size:11.3px;line-height:11.3px;color:#1A2E6E;font-family:"Liberation Sans",sans-serif;transform:scaleX(1.0016);'>Heading 1</div>
<div class='t' style='left:797.7px;top:101.03px;font-size:11.3px;line-height:11.3px;color:#1A2E6E;font-family:"Liberation Sans",sans-serif;transform:scaleX(1.0094);'>Heading 2</div>
<div class='t' style='left:882.0px;top:97.83px;font-size:11.3px;line-height:11.3px;color:#15338A;font-family:"Liberation Sans",sans-serif;transform:scaleX(0.9803);'>Change</div>
<div class='t' style='left:883.0px;top:110.73px;font-size:11.3px;line-height:11.3px;color:#15338A;font-family:"Liberation Sans",sans-serif;transform:scaleX(0.8971);'>Styles</div>
<div class='t' style='left:957.5px;top:64.03px;font-size:11.3px;line-height:11.3px;color:#15338A;font-family:"Liberation Sans",sans-serif;transform:scaleX(0.9916);'>Find</div>
<div class='t' style='left:957.5px;top:85.93px;font-size:11.3px;line-height:11.3px;color:#15338A;font-family:"Liberation Sans",sans-serif;transform:scaleX(0.9432);'>Replace</div>
<div class='t' style='left:957.5px;top:108.03px;font-size:11.3px;line-height:11.3px;color:#15338A;font-family:"Liberation Sans",sans-serif;transform:scaleX(0.9393);'>Select</div>
<div style='position:absolute;left:145px;top:24px;width:50px;height:50px;border-radius:50%;background:rgba(240,238,40,0.6)'></div><div style='position:absolute;left:166px;top:46px;width:6px;height:4px;background:#B4D4F6;border-radius:1px'></div>
<svg style='position:absolute;left:169px;top:47px' width='14' height='22' viewBox='0 0 14 22'><path d='M1 1V17L4.8 13.4L7.6 19.8L10.2 18.6L7.5 12.4H12.6Z' fill='#fff' stroke='#000' stroke-width='1.1' stroke-linejoin='miter'/></svg></body></html>
